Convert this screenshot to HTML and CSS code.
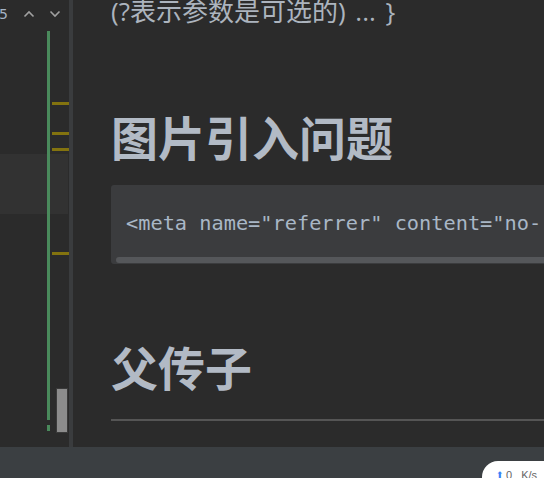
FILE: index.html
```html
<!DOCTYPE html>
<html lang="zh">
<head>
<meta charset="utf-8">
<link rel="stylesheet" href="styles.css">
</head>
<body>
<div class="app">
  <div class="workspace">
    <aside class="gutter">
      <div class="gutter-head">
        <span class="count">5</span>
        <svg class="chev" width="12" height="8" viewBox="0 0 12 8"><path d="M1.5 6.5 L6 2 L10.5 6.5" fill="none" stroke="#a0a0a0" stroke-width="1.6"/></svg>
        <svg class="chev" width="12" height="8" viewBox="0 0 12 8"><path d="M1.5 1.5 L6 6 L10.5 1.5" fill="none" stroke="#a0a0a0" stroke-width="1.6"/></svg>
      </div>
      <div class="band"></div>
      <div class="green-line"></div>
      <div class="green-dash"></div>
      <div class="mark m1"></div>
      <div class="mark m2"></div>
      <div class="mark m3"></div>
      <div class="mark m4"></div>
      <div class="thumb"></div>
    </aside>
    <div class="divider"></div>
    <main class="editor">
      <p class="para">(?表示参数是可选的) ... }</p>
      <h1 class="heading h-first">图片引入问题</h1>
      <div class="code">
        <pre class="code-line">&lt;meta name="referrer" content="no-referrer"&gt;</pre>
        <div class="code-scroll"></div>
      </div>
      <h1 class="heading h-second">父传子</h1>
      <hr class="rule">
    </main>
  </div>
  <footer class="statusbar">
    <div class="speed"><span class="arrow">⬆</span><span class="num">0</span><span class="unit">K/s</span></div>
  </footer>
</div>
</body>
</html>
```

FILE: styles.css
```css
* { box-sizing: border-box; }
html, body { margin: 0; padding: 0; }
body {
  width: 544px;
  height: 478px;
  overflow: hidden;
  background: #2b2b2b;
  font-family: "Open Sans", "Noto Sans CJK SC", sans-serif;
}
.app {
  display: flex;
  flex-direction: column;
  height: 478px;
}
.workspace {
  display: flex;
  height: 447px;
  overflow: hidden;
}
.gutter {
  position: relative;
  width: 69px;
  flex: none;
  background: #2b2b2b;
}
.gutter-head {
  display: flex;
  align-items: center;
  height: 28px;
}
.count {
  font-family: "DejaVu Sans", sans-serif;
  font-size: 14px;
  color: #a5b3c4;
  margin-left: -1px;
  line-height: 28px;
}
.chev { margin-left: 15px; }
.chev + .chev { margin-left: 14px; }
.band {
  position: absolute;
  left: 0; top: 154px;
  width: 68px; height: 60px;
  background: #323232;
}
.green-line {
  position: absolute;
  left: 47px; top: 31px;
  width: 3px; height: 389px;
  background: #4a8a5c;
}
.green-dash {
  position: absolute;
  left: 47px; top: 425px;
  width: 3px; height: 6px;
  background: #4a8a5c;
}
.mark {
  position: absolute;
  left: 52px;
  width: 17px; height: 3px;
  background: #83730f;
}
.m1 { top: 102px; }
.m2 { top: 132px; }
.m3 { top: 148px; }
.m4 { top: 252px; }
.thumb {
  position: absolute;
  left: 56px; top: 388px;
  width: 12px; height: 45px;
  background: #8c8c8c;
  border: 1px solid #3a3a3a;
}
.divider {
  width: 4px;
  flex: none;
  background: #3a3c3e;
}
.editor {
  flex: 1;
  padding-left: 38px;
  overflow: hidden;
}
.para {
  margin: -6px 0 0;
  font-size: 26px;
  line-height: 34px;
  word-spacing: 3px;
  color: #acb4be;
  white-space: nowrap;
}
.heading {
  margin: 0;
  font-family: "Noto Sans CJK SC", sans-serif;
  font-weight: 700;
  font-size: 47px;
  line-height: 60px;
  color: #b2bac5;
  white-space: nowrap;
}
.h-first { margin-top: 78px; }
.code {
  margin-top: 19px;
  width: 470px;
  height: 79px;
  background: #3b3c3e;
  border-radius: 3px;
  padding: 24px 0 1px 5px;
  display: flex;
  flex-direction: column;
  overflow: hidden;
}
.code-line {
  margin: 0 0 20px 10px;
  font-family: "DejaVu Sans Mono", monospace;
  font-size: 20.3px;
  line-height: 28px;
  color: #a9b7c6;
  white-space: pre;
}
.code-scroll {
  height: 6px;
  width: 460px;
  border-radius: 3px;
  background: #55575a;
}
.h-second { margin-top: 72px; }
.rule {
  margin: 23px 0 0;
  width: 470px;
  height: 2px;
  border: 0;
  background: #555555;
}
.statusbar {
  position: relative;
  height: 31px;
  background: #3b3f42;
  overflow: hidden;
}
.speed {
  position: absolute;
  left: 482px; top: 14px;
  width: 80px; height: 30px;
  background: #ffffff;
  border-radius: 16px 0 0 0;
  display: flex;
  align-items: flex-start;
  padding: 8px 0 0 14px;
  font-family: "Liberation Sans", sans-serif;
  font-size: 11px;
  line-height: 12px;
  color: #666666;
}
.arrow { color: #3b82f6; font-size: 9px; margin-right: 2px; }
.num { margin-right: 9px; }
```
